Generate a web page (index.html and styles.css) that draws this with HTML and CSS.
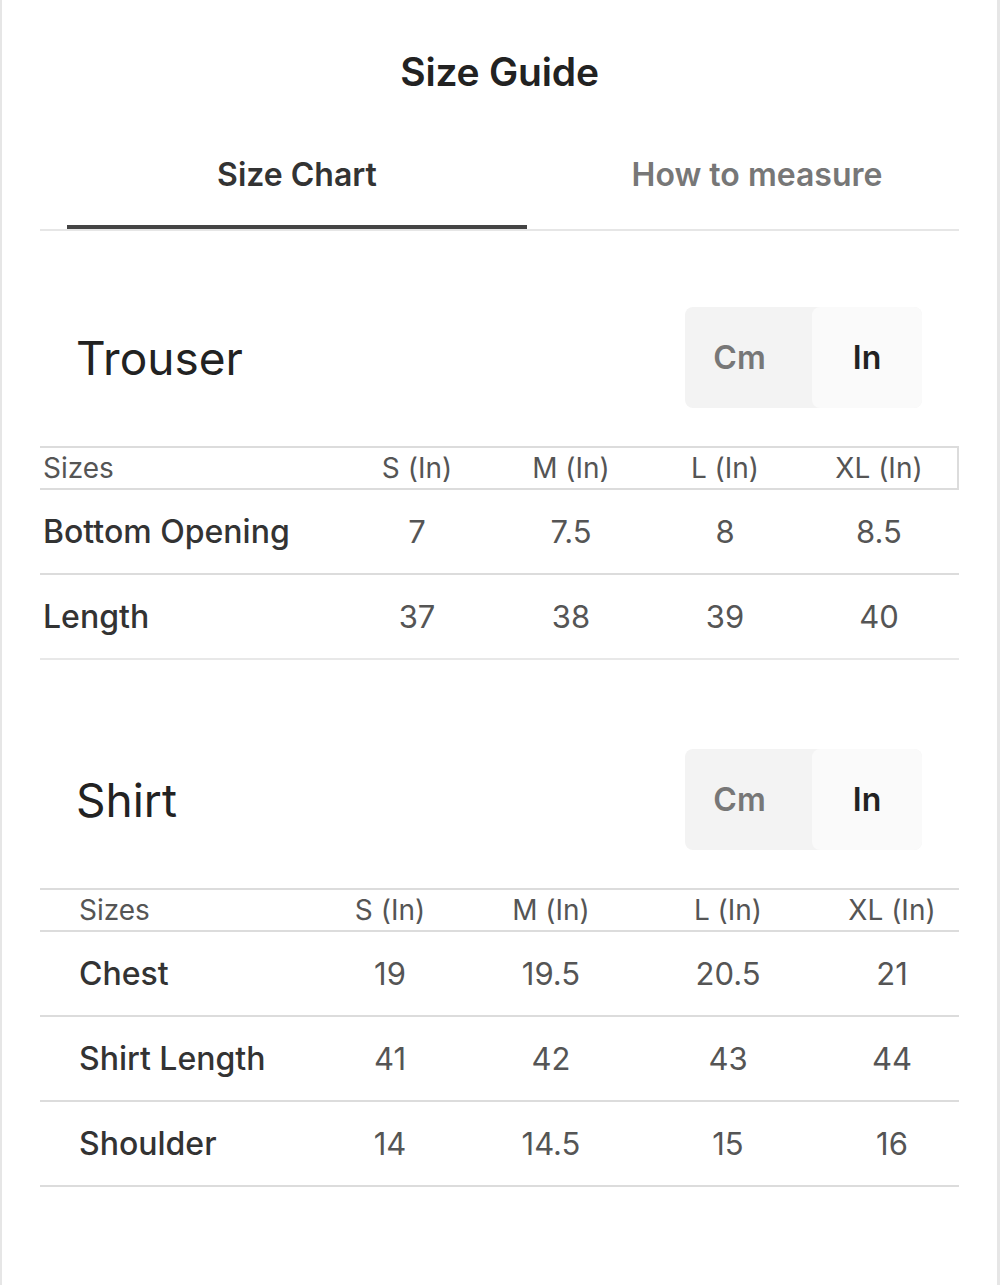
FILE: index.html
```html
<!DOCTYPE html>
<html lang="en">
<head>
<meta charset="utf-8">
<title>Size Guide</title>
<link rel="stylesheet" href="styles.css">
</head>
<body>
<div class="page">
  <h1 class="title">Size Guide</h1>

  <div class="tabs">
    <div class="tab-list">
      <div class="tab active">Size Chart</div>
      <div class="tab">How to measure</div>
    </div>
  </div>

  <section class="section trouser">
    <div class="section-head">
      <h2 class="section-title">Trouser</h2>
      <div class="unit-toggle">
        <div class="unit cm">Cm</div>
        <div class="unit in selected">In</div>
      </div>
    </div>
    <div class="chart chart-trouser">
      <div class="row head">
        <div class="cell label">Sizes</div>
        <div class="cell">S (In)</div>
        <div class="cell">M (In)</div>
        <div class="cell">L (In)</div>
        <div class="cell">XL (In)</div>
      </div>
      <div class="row body">
        <div class="cell label">Bottom Opening</div>
        <div class="cell">7</div>
        <div class="cell">7.5</div>
        <div class="cell">8</div>
        <div class="cell">8.5</div>
      </div>
      <div class="row body last">
        <div class="cell label">Length</div>
        <div class="cell">37</div>
        <div class="cell">38</div>
        <div class="cell">39</div>
        <div class="cell">40</div>
      </div>
    </div>
  </section>

  <section class="section shirt">
    <div class="section-head">
      <h2 class="section-title">Shirt</h2>
      <div class="unit-toggle">
        <div class="unit cm">Cm</div>
        <div class="unit in selected">In</div>
      </div>
    </div>
    <div class="chart chart-shirt">
      <div class="row head">
        <div class="cell label">Sizes</div>
        <div class="cell">S (In)</div>
        <div class="cell">M (In)</div>
        <div class="cell">L (In)</div>
        <div class="cell">XL (In)</div>
      </div>
      <div class="row body">
        <div class="cell label">Chest</div>
        <div class="cell">19</div>
        <div class="cell">19.5</div>
        <div class="cell">20.5</div>
        <div class="cell">21</div>
      </div>
      <div class="row body">
        <div class="cell label">Shirt Length</div>
        <div class="cell">41</div>
        <div class="cell">42</div>
        <div class="cell">43</div>
        <div class="cell">44</div>
      </div>
      <div class="row body">
        <div class="cell label">Shoulder</div>
        <div class="cell">14</div>
        <div class="cell">14.5</div>
        <div class="cell">15</div>
        <div class="cell">16</div>
      </div>
    </div>
  </section>
</div>
</body>
</html>
```

FILE: styles.css
```css
* { box-sizing: border-box; }

html, body {
  margin: 0;
  padding: 0;
  background: #ffffff;
}

body {
  font-family: "Inter", "Liberation Sans", Arial, sans-serif;
  color: #222;
}

.page {
  width: 1000px;
  min-height: 1285px;
  border-left: 2px solid #e6e6e6;
  border-right: 3px solid #e6e6e6;
  padding-top: 50px;
}

.title {
  margin: 0;
  font-size: 39px;
  line-height: 44px;
  font-weight: 600;
  text-align: center;
  color: #222;
  letter-spacing: -0.2px;
}

.tabs {
  margin: 26px 38px 0 38px;
  border-bottom: 2px solid #e6e6e6;
}

.tab-list {
  display: flex;
  width: 920px;
  margin-left: 27px;
}

.tab {
  width: 460px;
  padding: 35px 0 30px;
  font-size: 32px;
  line-height: 40px;
  font-weight: 600;
  text-align: center;
  color: #777;
  border-bottom: 4px solid transparent;
}

.tab.active {
  color: #333;
  border-bottom-color: #444;
}

.section {
  margin: 0 38px 0 38px;
}

.section.trouser { margin-top: 76px; }
.section.shirt { margin-top: 89px; }

.section-head {
  display: flex;
  align-items: center;
  justify-content: space-between;
  padding: 0 37px 0 36px;
}

.section-title {
  margin: 0;
  font-size: 46px;
  line-height: 54px;
  font-weight: 400;
  color: #222;
}

.unit-toggle {
  display: flex;
  width: 237px;
  height: 101px;
  border-radius: 8px;
  background: #f3f3f3;
}

.unit {
  display: flex;
  align-items: center;
  justify-content: center;
  font-size: 32px;
  font-weight: 600;
}

.unit.cm {
  width: 127px;
  padding-right: 18px;
  color: #777;
}

.unit.in {
  width: 110px;
  color: #222;
  background: #fafafa;
  border-radius: 8px;
}

.chart {
  margin-top: 38px;
}

.row {
  display: grid;
  align-items: center;
}

.chart-trouser .row {
  grid-template-columns: 300px 154px 154px 154px 154px;
}

.chart-shirt .row {
  grid-template-columns: 270px 160px 162px 192px 136px;
}

.row.head {
  height: 44px;
  border-top: 2px solid #dcdcdc;
  border-bottom: 2px solid #dcdcdc;
  font-size: 28px;
  color: #555;
}

.chart-trouser .row.head {
  border-right: 2px solid #dcdcdc;
}

.row.body {
  height: 85px;
  border-bottom: 2px solid #dcdcdc;
  font-size: 31px;
  color: #555;
}

.row.body.last {
  border-bottom-color: #e8e8e8;
}

.cell {
  text-align: center;
}

.cell.label {
  text-align: left;
}

.chart-trouser .cell.label { padding-left: 3px; }
.chart-shirt .cell.label { padding-left: 39px; }

.row.body .cell.label {
  color: #333;
  font-weight: 500;
  font-size: 32px;
}
```
